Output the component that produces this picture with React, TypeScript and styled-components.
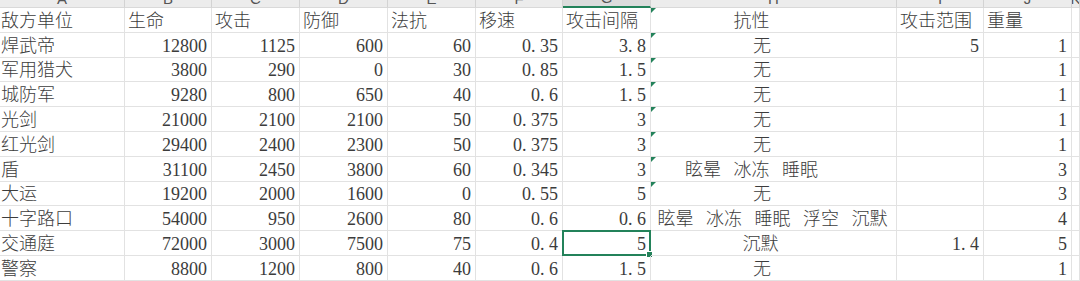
import * as React from "react";
import styled, { createGlobalStyle, css } from "styled-components";

const GREEN = "#23825a";

const GlobalStyle = createGlobalStyle`
  html, body {
    margin: 0;
    padding: 0;
    background: #ffffff;
    overflow: hidden;
  }
`;

const Sheet = styled.div`
  display: grid;
  grid-template-columns: 125px 87px 88px 88px 88px 87px 88px 246px 87px 88px 1fr;
  grid-template-rows: 8px repeat(11, 24.8px);
  width: 1080px;
  height: 281px;
  overflow: hidden;
  font-family: "Liberation Serif", "Noto Sans CJK SC", serif;
  font-size: 18px;
  font-weight: 300;
  color: #3c3c3c;
`;

const ColHead = styled.div<{ $selected?: boolean }>`
  position: relative;
  overflow: hidden;
  background: ${(p) => (p.$selected ? "#dcdcdc" : "#ececec")};
  border-right: 1px solid #d3d3d3;
  border-bottom: ${(p) => (p.$selected ? `2px solid ${GREEN}` : "1px solid #d9d9d9")};
  box-sizing: border-box;
  display: flex;
  justify-content: center;
  align-items: flex-end;
`;

const ColLetter = styled.span`
  font-family: "Liberation Sans", sans-serif;
  font-size: 15px;
  line-height: 15px;
  color: #555555;
  margin-bottom: 1px;
`;

const Cell = styled.div<{ $align: "left" | "right" | "center"; $padR?: number; $flag?: boolean }>`
  position: relative;
  box-sizing: border-box;
  display: flex;
  align-items: flex-end;
  justify-content: ${(p) =>
    p.$align === "left" ? "flex-start" : p.$align === "right" ? "flex-end" : "center"};
  border-right: 1px solid #e2e2e2;
  border-bottom: 1px solid #e2e2e2;
  padding: 0 ${(p) => p.$padR ?? 4}px 2px 3px;
  line-height: 18px;
  white-space: pre;
  overflow: visible;

  ${(p) =>
    p.$flag &&
    css`
      &::before {
        content: "";
        position: absolute;
        left: 0;
        top: 0;
        width: 0;
        height: 0;
        border-top: 5px solid ${GREEN};
        border-right: 5px solid transparent;
      }
    `}
`;

const FirstCell = styled(Cell)`
  padding-left: 1px;
`;

const Words = styled.span`
  word-spacing: 8px;
`;

const Dot = styled.span`
  display: inline-block;
  width: 0.5em;
`;

const Selection = styled.div`
  position: absolute;
  left: -1px;
  top: -1px;
  right: -1px;
  bottom: -1px;
  border: 2px solid ${GREEN};
  pointer-events: none;

  &::after {
    content: "";
    position: absolute;
    right: -4px;
    bottom: -4px;
    width: 5px;
    height: 5px;
    background: ${GREEN};
    border: 1px solid #ffffff;
  }
`;

const letters = ["A", "B", "C", "D", "E", "F", "G", "H", "I", "J", "K"];

const headers = ["敌方单位", "生命", "攻击", "防御", "法抗", "移速", "攻击间隔", "抗性", "攻击范围", "重量", ""];

const rows: string[][] = [
  ["焊武帝", "12800", "1125", "600", "60", "0.35", "3.8", "无", "5", "1"],
  ["军用猎犬", "3800", "290", "0", "30", "0.85", "1.5", "无", "", "1"],
  ["城防军", "9280", "800", "650", "40", "0.6", "1.5", "无", "", "1"],
  ["光剑", "21000", "2100", "2100", "50", "0.375", "3", "无", "", "1"],
  ["红光剑", "29400", "2400", "2300", "50", "0.375", "3", "无", "", "1"],
  ["盾", "31100", "2450", "3800", "60", "0.345", "3", "眩晕 冰冻 睡眠", "", "3"],
  ["大运", "19200", "2000", "1600", "0", "0.55", "5", "无", "", "3"],
  ["十字路口", "54000", "950", "2600", "80", "0.6", "0.6", "眩晕 冰冻 睡眠 浮空 沉默", "", "4"],
  ["交通庭", "72000", "3000", "7500", "75", "0.4", "5", "沉默", "1.4", "5"],
  ["警察", "8800", "1200", "800", "40", "0.6", "1.5", "无", "", "1"],
];

// where each resist text sits inside the wide column
const resistPad: Record<string, number> = {
  "无": 26,
  "沉默": 29,
  "眩晕 冰冻 睡眠": 47,
  "眩晕 冰冻 睡眠 浮空 沉默": 5,
};

function Num({ value }: { value: string }) {
  const parts = value.split(".");
  if (parts.length === 1) return <span>{value}</span>;
  return (
    <span>
      {parts[0]}
      <Dot>.</Dot>
      {parts[1]}
    </span>
  );
}

export default function App() {
  return (
    <>
      <GlobalStyle />
      <Sheet>
        {letters.map((l, i) => (
          <ColHead key={l} $selected={i === 6}>
            <ColLetter>{l}</ColLetter>
          </ColHead>
        ))}

        {headers.map((h, i) =>
          i === 0 ? (
            <FirstCell key={i} $align="left">{h}</FirstCell>
          ) : i === 7 ? (
            <Cell key={i} $align="center" $padR={47} $flag>
              {h}
            </Cell>
          ) : (
            <Cell key={i} $align="left">{h}</Cell>
          )
        )}

        {rows.map((r, ri) => (
          <React.Fragment key={ri}>
            <FirstCell $align="left">{r[0]}</FirstCell>
            {r.slice(1, 7).map((v, ci) => (
              <Cell key={ci} $align="right">
                <Num value={v} />
                {ci === 5 && ri === 8 && <Selection />}
              </Cell>
            ))}
            <Cell $align="center" $padR={resistPad[r[7]]} $flag={ri < 7}>
              <Words>{r[7]}</Words>
            </Cell>
            <Cell $align="right">
              <Num value={r[8]} />
            </Cell>
            <Cell $align="right">
              <Num value={r[9]} />
            </Cell>
            <Cell $align="left" />
          </React.Fragment>
        ))}
      </Sheet>
    </>
  );
}
